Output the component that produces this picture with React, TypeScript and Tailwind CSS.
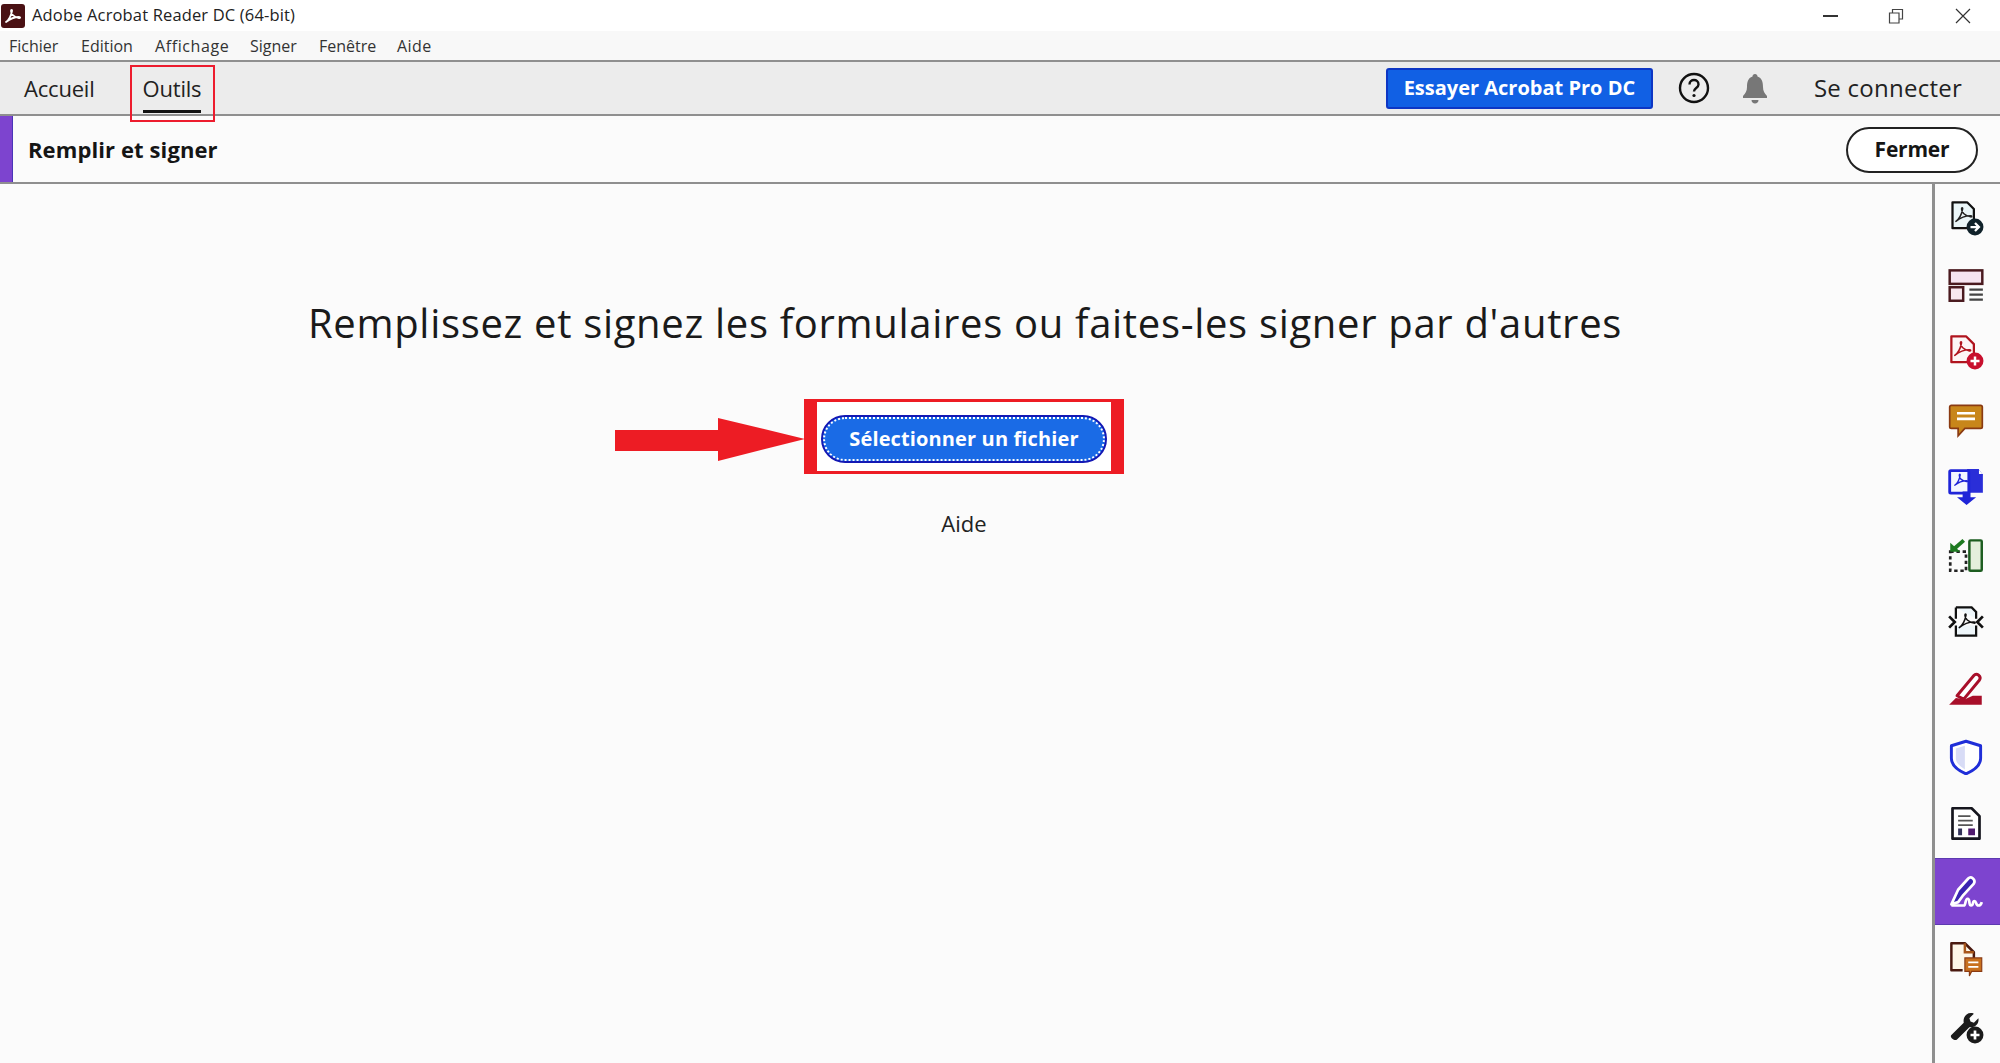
import React from 'react';

const font = { fontFamily: '"Open Sans", "Noto Sans", sans-serif' };

const Squiggle = ({ color = '#111', w = 1.6, t = '' }: { color?: string; w?: number; t?: string }) => (
    <path
        transform={t}
        d="M5 18c3-2 5-6 6-11 .3-1.5-1-1.5-1 0 0 3 3 6 8 7 1.5.3 1.5-1 0-1-3 0-8 1-13 5z"
        fill="none"
        stroke={color}
        strokeWidth={w}
        strokeLinejoin="round"
    />
);

const icons: React.ReactNode[] = [
    // exporter
    <>
        <path d="M4 2h13l6 6v17H4z" fill="#eaf6f8" stroke="#111" strokeWidth="2" strokeLinejoin="round" />
        <Squiggle t="translate(2 1)" color="#222" w={1.3} />
        <circle cx="24" cy="24" r="7.5" fill="#10222a" />
        <path d="M20 24h7M24 20.5l3.5 3.5-3.5 3.5" fill="none" stroke="#fff" strokeWidth="2" />
    </>,
    // mise en page
    <>
        <rect x="1.5" y="3" width="29" height="12" fill="#f6e4f0" stroke="#4a1a1f" strokeWidth="2.2" />
        <rect x="1.5" y="18" width="12" height="12" fill="#f8e8ef" stroke="#4a1a1f" strokeWidth="2.2" />
        <path d="M19 20h12M19 24.5h12M19 29h12" stroke="#444" strokeWidth="2" />
    </>,
    // creer pdf
    <>
        <path d="M3 2h13l7 7v16H3z" fill="#fdf6f6" stroke="#b0141e" strokeWidth="2" strokeLinejoin="round" />
        <Squiggle t="translate(1 1)" color="#b0141e" w={1.4} />
        <circle cx="24" cy="24" r="7.5" fill="#c8102e" />
        <path d="M24 20v8M20 24h8" stroke="#fff" strokeWidth="2.2" />
    </>,
    // commentaire
    <>
        <path d="M3 3h26a1.5 1.5 0 0 1 1.5 1.5V22a1.5 1.5 0 0 1-1.5 1.5H15l-6 6.5v-6.5H3A1.5 1.5 0 0 1 1.5 22V4.500A1.500 1.500 0 0 1 3 3z" fill="#c8861a" stroke="#8a3a12" strokeWidth="1.5" />
        <path d="M8 10h16M8 15h16" stroke="#fff" strokeWidth="2.4" />
    </>,
    // combiner
    <>
        <path d="M17 0h10l4 5v16H17z" fill="#2a2ed8" />
        <path d="M27 0v5h4" fill="#fff" stroke="#2a2ed8" strokeWidth="1" />
        <rect x="1.5" y="1.5" width="17" height="20" fill="#f4f6ff" stroke="#1f24d8" strokeWidth="2.5" rx="1" />
        <Squiggle t="translate(2 0) scale(.8)" color="#1f24d8" w={1.5} />
        <path d="M13 20h7v5h5l-8.5 7-8.500-7h5z" fill="#1f24d8" />
    </>,
    // organiser
    <>
        <rect x="2" y="13" width="14" height="17" fill="none" stroke="#222" strokeWidth="2.4" strokeDasharray="3 2.5" />
        <rect x="19" y="3" width="11" height="27" rx="1" fill="#e4efdc" stroke="#1d5d20" strokeWidth="2.2" />
        <path d="M14 3 6 10" fill="none" stroke="#1d7a20" strokeWidth="3.4" />
        <path d="M2 5v8h9z" fill="#1d7a20" />
    </>,
    // compresser
    <>
        <path d="M7 3h14l4 4v6M25 19v9H7v-9M7 13V3" fill="#eef6fa" stroke="#111" strokeWidth="2" />
        <Squiggle t="translate(5 3)" color="#111" w={1.3} />
        <path d="M1 11l5 5-5 5M31 11l-5 5 5 5" fill="none" stroke="#111" strokeWidth="2.4" />
    </>,
    // biffer
    <>
        <path d="M8 22 23 4c2.5-3 7 1 5 4L14 25z" fill="#fff" stroke="#a80f2a" strokeWidth="2.6" strokeLinejoin="round" />
        <path d="M1 30l6-6 8 1 7-3h8v8z" fill="#a80f2a" />
    </>,
    // proteger
    <>
        <path d="M16 2 29 6v11c0 7-6 11-13 14C9 28 3 24 3 17V6z" fill="#fff" stroke="#1f2ed8" strokeWidth="2.6" strokeLinejoin="round" />
        <path d="M15 6 7 8.5V17c0 4 3 7 8 10z" fill="#d8dcf6" />
    </>,
    // formulaire
    <>
        <path d="M4 2h17l7 7v20H4z" fill="#fff" stroke="#16161e" strokeWidth="2.4" strokeLinejoin="round" />
        <path d="M9 9h11M9 13h13M9 17h13" stroke="#555" strokeWidth="1.6" />
        <rect x="9" y="20" width="3.5" height="6" fill="#33335a" />
        <path d="M18 20h6v6h-6z" fill="#501a6e" />
    </>,
    // remplir et signer (actif)
    <>
        <path d="M3 27 9 14 18 4c2.5-2.5 7 1 5 4.5L13 19.5 9 25z" fill="#3a24b0" stroke="#fff" strokeWidth="2.4" strokeLinejoin="round" />
        <path d="M3 28h11c2 0 1-6 3.5-6s.5 6 3 6 1-4 3-4 1 4 3.5 4 2.500-1.500 3-3" fill="none" stroke="#fff" strokeWidth="2.4" />
    </>,
    // envoyer commentaires
    <>
        <path d="M3 2h12l8 8v5H15v11H3z" fill="#fdf6e8" stroke="none" />
        <path d="M13 26H3V2h12l8 8v5" fill="none" stroke="#4a1a10" strokeWidth="2.2" strokeLinejoin="round" />
        <path d="M15 2v8h8" fill="none" stroke="#a8561a" strokeWidth="2.2" />
        <path d="M15 15h15v12H21l-2 4v-4h-4z" fill="#c8701e" stroke="#8a3a12" strokeWidth="1" />
        <path d="M18 19h9M18 23h9" stroke="#fff" strokeWidth="1.6" />
    </>,
    // ajouter outils
    <>
        <path d="M3 24 14 13c-1-5 3-10 9-8l-4 4 1 3 3 1 4-4c1 5-3 9-8 8L8 28c-2 2-7-2-5-4z" fill="#1b1b1b" />
        <circle cx="24" cy="24" r="7.5" fill="#1b1b1b" />
        <path d="M24 20v8M20 24h8" stroke="#fff" strokeWidth="2.4" />
    </>,
];

function SideIcon({ index }: { index: number }) {
    const active = index === 10;
    return (
        <div className={active ? 'h-[67.4px] flex items-center justify-center bg-[#7d44cf] border-y border-[#5c3ab0]' : 'h-[67.4px] flex items-center justify-center'}>
            <svg width="36" height="36" viewBox="0 0 32 32" className="mr-[3px]">{icons[index]}</svg>
        </div>
    );
}

export default function App() {
    const menu = [
        ['Fichier', 'w-[72px]'],
        ['Edition', 'w-[74px]'],
        ['Affichage', 'w-[95px] tracking-[0.6px]'],
        ['Signer', 'w-[69px]'],
        ['Fenêtre', 'w-[78px]'],
        ['Aide', 'w-[50px] tracking-[0.4px]'],
    ];

    return (
        <div className="w-[2000px] h-[1063px] overflow-hidden flex flex-col bg-[#fbfbfb] text-[#1c1c1c]" style={font}>
            {/* barre de titre */}
            <div className="h-[31px] bg-white flex items-center shrink-0">
                <svg width="24" height="24" viewBox="0 0 24 24" className="ml-[1px]">
                    <rect width="24" height="24" rx="3" fill="#4a1114" />
                    <Squiggle color="#fff" w={1.8} t="translate(0 0)" />
                </svg>
                <span className="ml-[7px] text-[16.5px] tracking-[0.15px] text-[#222]">Adobe Acrobat Reader DC (64-bit)</span>
                <div className="ml-auto flex items-center">
                    <svg width="16" height="16" viewBox="0 0 16 16" className="mr-[49px]"><path d="M0 8h15" stroke="#333" strokeWidth="2" /></svg>
                    <svg width="16" height="16" viewBox="0 0 16 16" className="mr-[51px]"><path d="M1.5 5H11v10H1.5zM4.5 5V1.5h10V11H11" fill="none" stroke="#444" strokeWidth="1.2" /></svg>
                    <svg width="16" height="16" viewBox="0 0 16 16" className="mr-[29px]"><path d="M1 1l14 14M15 1 1 15" stroke="#333" strokeWidth="1.2" /></svg>
                </div>
            </div>

            {/* menu */}
            <div className="h-[31px] bg-[#f8f8f8] border-b-2 border-[#8f8f8f] flex items-center pl-[9px] shrink-0 text-[16px] text-[#333]">
                {menu.map(([label, w]) => (
                    <span key={label} className={w}>{label}</span>
                ))}
            </div>

            {/* onglets */}
            <div className="h-[54px] bg-[#ececec] border-b-2 border-[#8f8f8f] flex items-center shrink-0 relative">
                <span className="ml-[24px] text-[22px] tracking-[-0.2px] text-[#222]">Accueil</span>
                <div className="ml-[48px] h-full flex flex-col items-center justify-center relative">
                    <span className="text-[22px] tracking-[-0.2px] text-[#222]">Outils</span>
                    <div className="absolute bottom-[1px] left-0 right-0 h-[3px] bg-[#111]" />
                </div>
                {/* cadre rouge autour de Outils */}
                <div className="absolute left-[130px] top-[3px] w-[85px] h-[57px] border-2 border-[#ed1c2e]" />

                <button className="ml-auto w-[267px] h-[41px] rounded-[3px] bg-[#1160e4] border-2 border-[#0d36c4] text-white font-bold text-[20px] tracking-[0px] flex items-center justify-center">
                    Essayer Acrobat Pro DC
                </button>
                <svg width="34" height="34" viewBox="0 0 34 34" className="ml-[24px]">
                    <circle cx="17" cy="17" r="14" fill="none" stroke="#111" strokeWidth="2.4" />
                    <path d="M12.5 13.5c0-6 9-6 9 0 0 3.5-4.5 3.5-4.5 7" fill="none" stroke="#111" strokeWidth="2.4" />
                    <circle cx="17" cy="24.5" r="1.6" fill="#111" />
                </svg>
                <svg width="26" height="32" viewBox="0 0 26 32" className="ml-[31px]">
                    <path d="M13 2c1.500 0 2.500 1 2.500 2.500C20 6 21 10 21 15c0 4 1.500 6 4 9v2H1v-2c2.500-3 4-5 4-9 0-5 1-9 5.500-10.500C10.500 3 11.500 2 13 2z" fill="#777" />
                    <path d="M9.5 28h7c0 2-1.500 3.500-3.500 3.500S9.500 30 9.500 28z" fill="#777" />
                </svg>
                <span className="ml-[46px] mr-[38px] text-[24px] tracking-[0.25px] text-[#222]">Se connecter</span>
            </div>

            {/* outil courant */}
            <div className="h-[68px] border-b-2 border-[#8f8f8f] flex items-center shrink-0 bg-[#fbfbfb]">
                <div className="w-[13px] h-full bg-[#7d44cf] border-r border-[#4a35b8]" />
                <span className="ml-[15px] mt-[1px] font-bold text-[22px] tracking-[0.1px] text-[#151515]">Remplir et signer</span>
                <button className="ml-auto mr-[22px] mt-[1px] w-[132px] h-[46px] rounded-full bg-white border-2 border-[#222] font-bold text-[21px] tracking-[-0.2px] text-[#151515]">
                    Fermer
                </button>
            </div>

            <div className="flex-1 flex min-h-0">
                <main className="flex-1 flex flex-col items-center pr-[4px]">
                    <h1 className="mt-[114px] ml-[2px] h-[50px] leading-[50px] text-[40px] font-normal tracking-[0.68px] text-[#1a1a1a] whitespace-nowrap">
                        Remplissez et signez les formulaires ou faites-les signer par d'autres
                    </h1>
                    <div className="mt-[51px] relative">
                        {/* fleche rouge */}
                        <svg width="190" height="44" viewBox="0 0 190 44" className="absolute left-[-189px] top-[19px]">
                            <path d="M0 12h103V0l87 21-87 22V33H0z" fill="#ed1c24" />
                        </svg>
                        <div className="w-[320px] h-[75px] border-x-[13px] border-y-[3px] border-[#ed1c24] bg-white flex items-center justify-center">
                            <button className="mt-[4px] w-[286px] h-[48px] rounded-full bg-[#1a6be6] border-2 border-[#1318b4] text-white font-bold text-[20px] tracking-[0.13px] outline-dotted outline-2 outline-white -outline-offset-4">
                                Sélectionner un fichier
                            </button>
                        </div>
                    </div>
                    <a className="mt-[33px] leading-[32px] text-[22px] text-[#222]">Aide</a>
                </main>

                <aside className="w-[68px] shrink-0 border-l-[3px] border-[#8f8f8f] bg-[#fbfbfb] flex flex-col">
                    {icons.map((_, i) => (
                        <SideIcon key={i} index={i} />
                    ))}
                </aside>
            </div>
        </div>
    );
}
